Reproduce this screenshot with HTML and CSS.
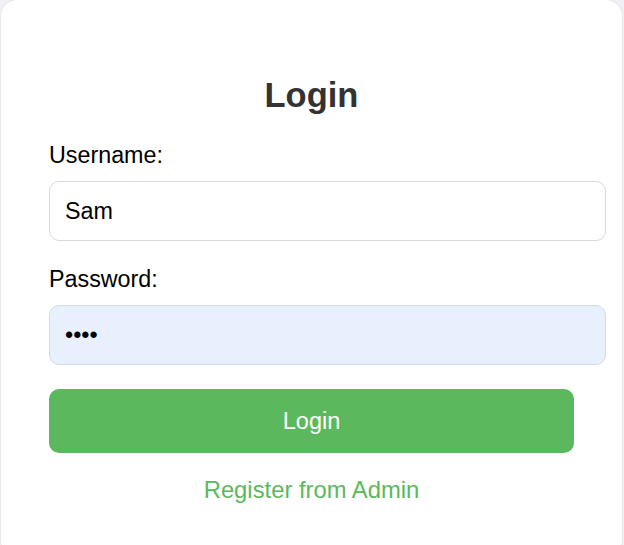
FILE: index.html
```html
<!DOCTYPE html>
<html lang="en">
<head>
<meta charset="utf-8">
<title>Login</title>
<link rel="stylesheet" href="styles.css">
</head>
<body>
<div class="card">
  <h1 class="title">Login</h1>
  <form class="form">
    <label class="label" for="username">Username:</label>
    <input class="input" id="username" type="text" value="Sam">
    <label class="label label-second" for="password">Password:</label>
    <input class="input input-autofill" id="password" type="password" value="1234">
    <button class="btn" type="button">Login</button>
  </form>
  <a class="link" href="#">Register from Admin</a>
</div>
</body>
</html>
```
FILE: styles.css
```css
html, body {
  margin: 0;
  padding: 0;
}
body {
  background: #eff1f5;
  font-family: "Liberation Sans", Arial, sans-serif;
  overflow: hidden;
}
.card {
  box-sizing: border-box;
  width: 621px;
  height: 556px;
  margin-left: 1px;
  padding: 75px 48px 0 48px;
  background: #ffffff;
  border-radius: 16px;
  box-shadow: 0 0 2px rgba(0, 0, 0, 0.12);
}
.title {
  margin: 0;
  font-size: 34.5px;
  line-height: 40px;
  font-weight: bold;
  color: #333333;
  text-align: center;
}
.form {
  display: flex;
  flex-direction: column;
  align-items: flex-start;
  margin-top: 27px;
}
.label {
  font-size: 23.3px;
  line-height: 26px;
  color: #000000;
  margin-bottom: 13px;
}
.label-second {
  margin-top: 25px;
}
.input {
  box-sizing: border-box;
  width: 557px;
  height: 60px;
  margin: 0;
  padding: 0 15px;
  border: 1px solid #dadada;
  border-radius: 10px;
  background: #ffffff;
  font-family: "Liberation Sans", Arial, sans-serif;
  font-size: 23.3px;
  color: #000000;
  outline: none;
}
.input-autofill {
  background: #e8f0fe;
  border-color: #d6dbe3;
}
.btn {
  box-sizing: border-box;
  width: 525px;
  height: 64px;
  margin-top: 24px;
  border: none;
  border-radius: 10px;
  background: #5cb85c;
  color: #ffffff;
  font-family: "Liberation Sans", Arial, sans-serif;
  font-size: 23.5px;
  cursor: pointer;
}
.link {
  display: block;
  margin-top: 24px;
  font-size: 23.8px;
  line-height: 26px;
  color: #5cb85c;
  text-align: center;
  text-decoration: none;
}
```
